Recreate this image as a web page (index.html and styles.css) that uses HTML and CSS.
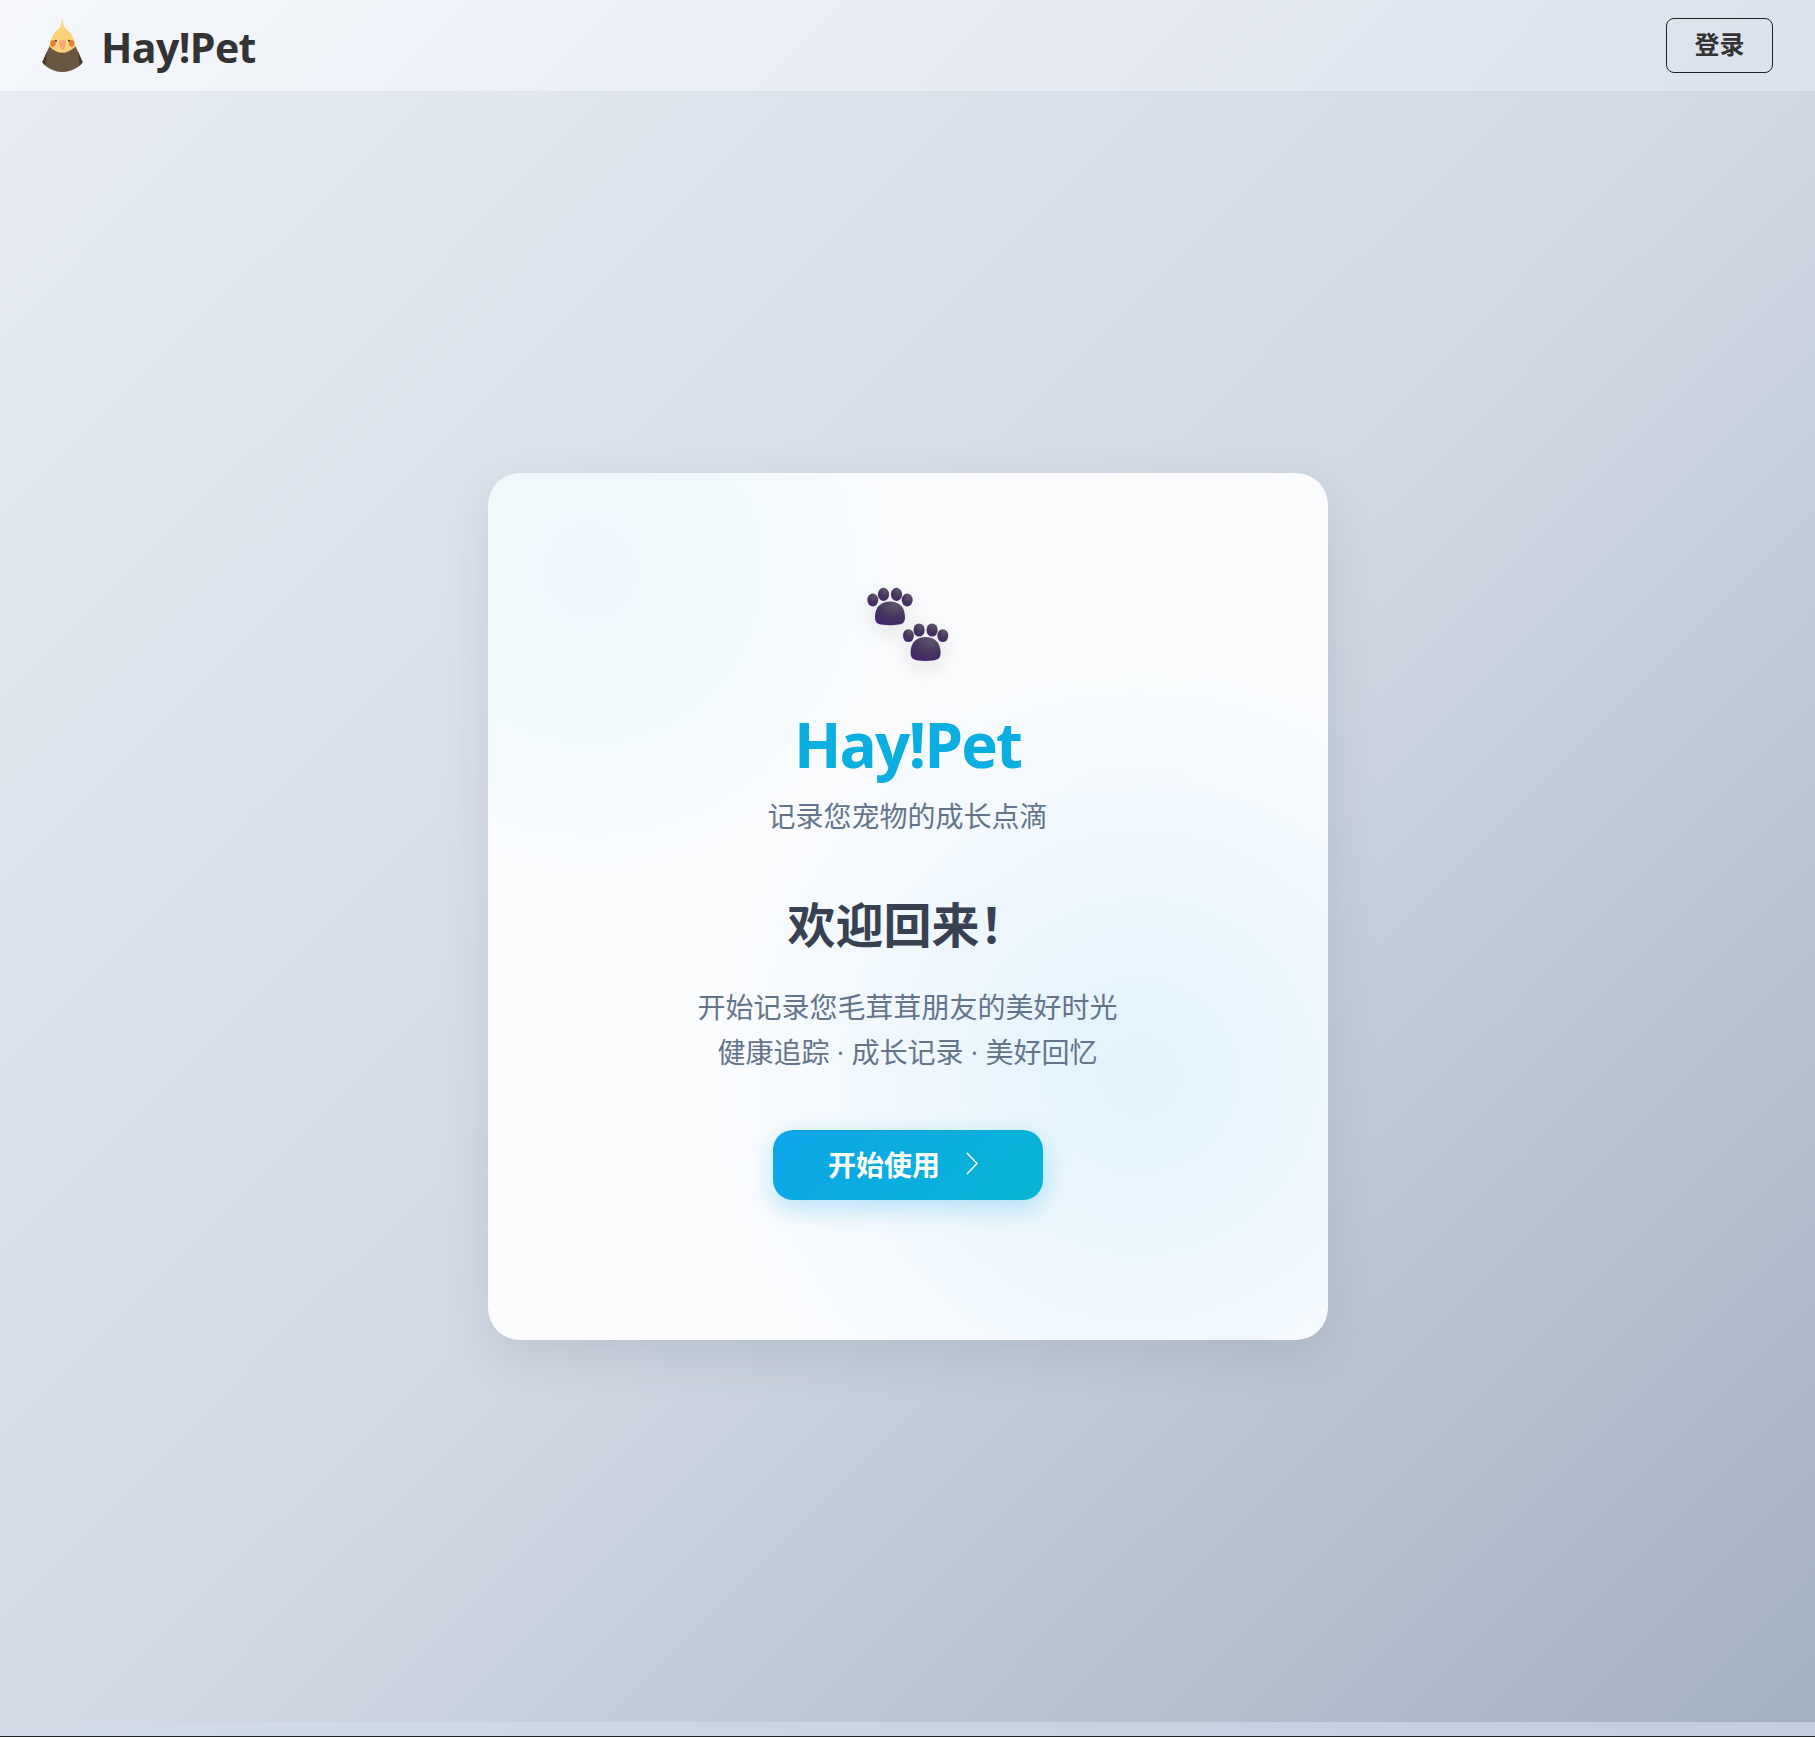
FILE: index.html
```html
<!DOCTYPE html>
<html lang="zh-CN">
  <head>
    <meta charset="UTF-8" />
    <meta name="viewport" content="width=device-width, initial-scale=1.0" />
    <title>Hay!Pet</title>
    <link rel="stylesheet" href="styles.css">
  </head>
  <body>
    <header class="navbar">
      <a class="brand" href="#">
        <svg class="brand-logo" viewBox="126 54 123 165" aria-hidden="true">
          <path d="M150 135 L127 187 Q132 194 140 200 Q187 232 235 200 Q243 194 248 187 L225 135 Z" fill="#6b5640" />
          <path d="M142 152 L127 187 L136 197 Z" fill="#43382b" />
          <path d="M233 152 L248 187 L239 197 Z" fill="#43382b" />
          <path d="M187 55 C189 72 192 80 197 86 C212 95 225 118 226 140 C212 152 200 158 187 158 C174 158 162 152 149 140 C150 118 162 95 177 86 C182 80 185 72 187 55 Z" fill="#f9d27a" />
          <ellipse cx="159" cy="130" rx="8" ry="10" fill="#e5802f" />
          <ellipse cx="215" cy="130" rx="8" ry="10" fill="#e5802f" />
          <circle cx="168" cy="122" r="3" fill="#3b3025" />
          <circle cx="207" cy="122" r="3" fill="#3b3025" />
          <path d="M177 122 Q187 118 198 122 Q197 142 187 152 Q178 142 177 122 Z" fill="#f2a877" />
        </svg>
        <span class="brand-name">Hay!Pet</span>
      </a>
      <button class="login-btn" type="button">登录</button>
    </header>

    <main class="content">
      <section class="card">
        <svg class="paws" viewBox="0 0 95 85" aria-hidden="true">
          <defs>
            <radialGradient id="padFill" cx="0.65" cy="0.15" r="0.95">
              <stop offset="0" stop-color="#5f566c" />
              <stop offset="0.55" stop-color="#47355f" />
              <stop offset="1" stop-color="#43246f" />
            </radialGradient>
            <g id="paw">
              <ellipse cx="12.8" cy="20" rx="5.5" ry="6.4" />
              <ellipse cx="23.5" cy="14.4" rx="5.6" ry="6.6" />
              <ellipse cx="36.5" cy="14.4" rx="5.6" ry="6.6" />
              <ellipse cx="47.2" cy="20" rx="5.5" ry="6.4" />
              <path d="M15 37 C15 26 22 21.5 30 21.5 C38 21.5 45 26 45 37 C45 42 43 44 39 44.6 Q30 46 21 44.6 C17 44 15 42 15 37 Z" />
            </g>
          </defs>
          <use href="#paw" fill="url(#padFill)" />
          <use href="#paw" fill="url(#padFill)" x="35.6" y="35.6" />
        </svg>
        <h1 class="card-title">Hay!Pet</h1>
        <p class="card-subtitle">记录您宠物的成长点滴</p>
        <h2 class="welcome">欢迎回来！</h2>
        <p class="intro">开始记录您毛茸茸朋友的美好时光<br />健康追踪 · 成长记录 · 美好回忆</p>
        <button class="start-btn" type="button">
          开始使用
          <svg class="chevron" viewBox="0 0 12 23" aria-hidden="true">
            <path d="M1 1 L11 11.5 L1 22" />
          </svg>
        </button>
      </section>
    </main>

    <div class="page-end"></div>
  </body>
</html>
```

FILE: styles.css
```css
* {
  box-sizing: border-box;
}
html,
body {
  height: 100%;
}
body {
  display: flex;
  flex-direction: column;
  margin: 0;
  font-family: "Open Sans", "Noto Sans CJK SC", sans-serif;
  background: linear-gradient(135deg, #e2e8f0, #c2cde0);
}
.navbar {
  display: flex;
  align-items: center;
  justify-content: space-between;
  flex: none;
  height: 91px;
  padding: 0 42px;
  background: linear-gradient(135deg, #f5f7fb, #dbe2ed);
}
.brand {
  display: flex;
  align-items: center;
  gap: 18px;
  color: #333;
  text-decoration: none;
}
.brand-logo {
  width: 41px;
  height: 55px;
}
.brand-name {
  padding-top: 4px;
  font-size: 41px;
  font-weight: 700;
  letter-spacing: -0.6px;
  line-height: 55px;
}
.login-btn {
  width: 107px;
  height: 55px;
  padding: 0 0 6px;
  border: 1px solid #222;
  border-radius: 8px;
  background: transparent;
  color: #333;
  font-family: inherit;
  font-size: 25px;
  font-weight: 700;
}
.content {
  display: flex;
  align-items: center;
  justify-content: center;
  flex: 1;
  background: linear-gradient(135deg, #e8edf4 0%, #d1d9e4 50%, #a3b0c3 100%);
}
.card {
  display: flex;
  flex-direction: column;
  align-items: center;
  width: 840px;
  height: 867px;
  padding-top: 107px;
  border-radius: 32px;
  background:
    radial-gradient(circle 320px at 102px 97px, rgba(6, 182, 212, 0.055), rgba(6, 182, 212, 0.04) 45%, rgba(6, 182, 212, 0) 100%),
    radial-gradient(circle 430px at 652px 603px, rgba(14, 165, 233, 0.11), rgba(14, 165, 233, 0.055) 50%, rgba(14, 165, 233, 0) 100%),
    radial-gradient(circle 260px at 640px 100px, rgba(245, 158, 11, 0.012), rgba(245, 158, 11, 0) 100%),
    #fbfcfe;
  box-shadow: 0 16px 48px rgba(71, 85, 105, 0.14);
}
.paws {
  width: 95px;
  height: 85px;
  filter: drop-shadow(0 8px 12px rgba(0, 0, 0, 0.1));
}
.card-title {
  margin: 37px 0 0;
  color: #0aaee0;
  font-size: 62px;
  font-weight: 700;
  letter-spacing: -1.9px;
  line-height: 84px;
}
.card-subtitle {
  margin: 10px 0 0;
  color: #64748b;
  font-size: 28px;
  line-height: 40px;
}
.welcome {
  margin: 55px 0 0;
  color: #374151;
  font-size: 48px;
  font-weight: 700;
  line-height: 68px;
}
.intro {
  margin: 26px 0 0;
  color: #64748b;
  font-size: 28px;
  line-height: 45px;
  text-align: center;
}
.start-btn {
  display: flex;
  align-items: center;
  justify-content: center;
  gap: 26px;
  width: 270px;
  height: 70px;
  margin-top: 55px;
  padding: 0 9px 3px 0;
  border: none;
  border-radius: 20px;
  background: linear-gradient(135deg, #0ea5e9, #06b6d4);
  box-shadow: 0 8px 24px rgba(14, 165, 233, 0.28);
  color: #fff;
  font-family: inherit;
  font-size: 28px;
  font-weight: 700;
}
.chevron {
  width: 12px;
  height: 23px;
  fill: none;
  stroke: #fff;
  stroke-width: 1.5;
}
.page-end {
  flex: none;
  height: 15px;
  border-bottom: 1px solid #1f2328;
}
```
